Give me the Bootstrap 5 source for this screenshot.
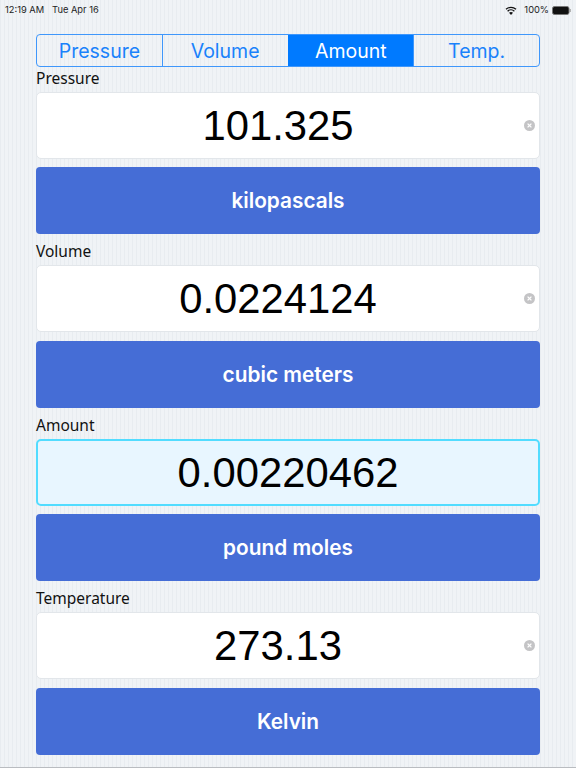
<!doctype html>
<html lang="en"><head><meta charset="utf-8"><title>Converter</title>
<link href="https://cdn.jsdelivr.net/npm/bootstrap@5.3.0/dist/css/bootstrap.min.css" rel="stylesheet">
<style>
html,body{height:768px;overflow:hidden}
body{background-color:#edf1f5;background-image:repeating-linear-gradient(90deg,#e8ecf0 0,#e8ecf0 1px,#f0f3f6 1px,#f0f3f6 4px);font-family:"Inter","Liberation Sans",sans-serif;color:#000;position:relative}
body::after{content:"";position:absolute;left:0;right:0;bottom:0;height:1px;background:#b9bcc0}
.status-strip{height:16px;padding:4px 5px 0;font-size:9.3px;color:#222}
.status-strip .gap-left{margin-left:8px}
.status-right{gap:3px}
.app-wrap{padding:18px 36px 0}
.seg{height:33px;border:1px solid #3f97fb;border-radius:4px;overflow:hidden}
.seg-item{flex:1 1 0;display:flex;align-items:center;justify-content:center;padding-top:2px;font-size:19.5px;font-weight:400;color:#1a82fb;border-left:1px solid #3f97fb}
.seg-item:first-child{border-left:0}
.seg-item.on{background:#007aff;color:#fff;border-left-color:#007aff}
.fld-label{font-family:"Noto Sans",sans-serif;font-size:15.5px;line-height:21px;height:22px;margin-top:7px;margin-bottom:2px;color:#111}
.first-label{margin-top:.5px}
.val-box{height:67px;background:#fff;border:1px solid #e2e6ea;border-radius:5px;font-family:"Liberation Sans",sans-serif;font-size:41.8px;position:relative;padding-right:20px;padding-top:2px}
.val-box.active-box{background:#e8f6ff;border:2px solid #52dcff;padding-right:0}
.clear-x{position:absolute;right:4px;top:50%;margin-top:-5.5px;width:11px;height:11px}
.unit-btn{display:flex;align-items:center;justify-content:center;width:100%;height:67px;margin-top:8.5px;padding-top:2px;background:#456dd6;border:0;border-radius:4px;color:#fff;font-size:20.8px;font-weight:600}
.unit-btn:hover{background:#456dd6;color:#fff}
</style></head><body>
<div class="status-strip d-flex align-items-center justify-content-between">
<div>12:19 AM<span class="gap-left">Tue Apr 16</span></div>
<div class="d-flex align-items-center status-right">
<svg class="me-1" width="12" height="9" viewBox="0 0 12 9" aria-hidden="true"><path d="M6 9 4 6.8a3 3 0 0 1 4 0Z" fill="#111"/><path d="M2.6 5.2a5 5 0 0 1 6.8 0" fill="none" stroke="#111" stroke-width="1.3"/><path d="M1 3.3a7.4 7.4 0 0 1 10 0" fill="none" stroke="#111" stroke-width="1.3"/></svg>
<span>100%</span>
<svg width="19" height="9" viewBox="0 0 19 9" aria-hidden="true"><rect x=".5" y=".5" width="16.5" height="8" rx="2" fill="#111" stroke="#777"/><rect x="17.5" y="3" width="1.2" height="3" fill="#999"/></svg>
</div></div>
<main class="app-wrap">
<div class="seg d-flex"><div class="seg-item">Pressure</div><div class="seg-item">Volume</div><div class="seg-item on">Amount</div><div class="seg-item">Temp.</div></div>

<div class="fld-label first-label">Pressure</div>
<div class="val-box d-flex align-items-center justify-content-center">101.325
<svg class="clear-x" viewBox="0 0 11 11" aria-hidden="true"><circle cx="5.5" cy="5.5" r="5.5" fill="#c4c4c6"/><path d="M3.6 3.6l3.8 3.8M7.4 3.6l-3.8 3.8" stroke="#fff" stroke-width="1.3"/></svg></div>
<button class="unit-btn" type="button">kilopascals</button>

<div class="fld-label">Volume</div>
<div class="val-box d-flex align-items-center justify-content-center">0.0224124
<svg class="clear-x" viewBox="0 0 11 11" aria-hidden="true"><circle cx="5.5" cy="5.5" r="5.5" fill="#c4c4c6"/><path d="M3.6 3.6l3.8 3.8M7.4 3.6l-3.8 3.8" stroke="#fff" stroke-width="1.3"/></svg></div>
<button class="unit-btn" type="button">cubic meters</button>

<div class="fld-label">Amount</div>
<div class="val-box active-box d-flex align-items-center justify-content-center">0.00220462</div>
<button class="unit-btn" type="button">pound moles</button>

<div class="fld-label">Temperature</div>
<div class="val-box d-flex align-items-center justify-content-center">273.13
<svg class="clear-x" viewBox="0 0 11 11" aria-hidden="true"><circle cx="5.5" cy="5.5" r="5.5" fill="#c4c4c6"/><path d="M3.6 3.6l3.8 3.8M7.4 3.6l-3.8 3.8" stroke="#fff" stroke-width="1.3"/></svg></div>
<button class="unit-btn" type="button">Kelvin</button>
</main>
<script src="https://cdn.jsdelivr.net/npm/bootstrap@5.3.0/dist/js/bootstrap.bundle.min.js"></script>
</body></html>
